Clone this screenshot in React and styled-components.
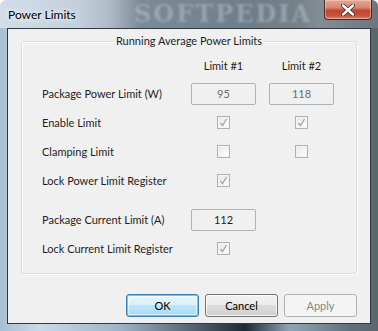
import React from 'react';
import styled, { createGlobalStyle } from 'styled-components';

const GlobalStyle = createGlobalStyle`
  html, body {
    margin: 0;
    padding: 0;
    width: 378px;
    height: 331px;
    overflow: hidden;
    background: #ffffff;
  }
  body {
    font-family: Lato, "Liberation Sans", sans-serif;
    font-size: 11px;
    color: #1e1e1e;
  }
`;

const Window = styled.div`
  width: 378px;
  height: 331px;
  display: flex;
  flex-direction: column;
  box-sizing: border-box;
  border-radius: 6px 6px 0 0;
  overflow: hidden;
`;

const TitleBar = styled.div`
  position: relative;
  height: 28px;
  flex: none;
  display: flex;
  align-items: flex-start;
  justify-content: space-between;
  background: linear-gradient(90deg, #d2dde8 0, #c3d0dc 80px, #aebbc7 110px, #7d8b96 140px, #6f7d88 250px, #76828a 300px, #838d93 320px, #6c767c 100%);
  overflow: hidden;
`;

const Title = styled.span`
  position: relative;
  z-index: 1;
  margin: 7px 0 0 8px;
  font-size: 12px;
  color: #000000;
  text-shadow: 0 0 8px rgba(255, 255, 255, 0.9), 0 0 4px rgba(255, 255, 255, 0.9);
`;

const Watermark = styled.span`
  position: absolute;
  left: 134px;
  top: 0;
  line-height: 28px;
  font-family: "DejaVu Serif", "Liberation Serif", serif;
  font-weight: bold;
  font-size: 24px;
  letter-spacing: 2px;
  color: rgba(190, 204, 216, 0.45);
  filter: blur(1.2px);
  pointer-events: none;
`;

const CloseButton = styled.div`
  position: relative;
  z-index: 1;
  width: 46px;
  height: 19px;
  margin-right: 6px;
  display: flex;
  align-items: center;
  justify-content: center;
  border: 1px solid #4a2a26;
  border-top: none;
  border-radius: 0 0 4px 4px;
  background: linear-gradient(180deg, #e7a895 0, #d68672 40%, #c4472e 55%, #c2513a 80%, #d8826a 100%);
  box-shadow: inset 0 0 0 1px rgba(255, 220, 210, 0.45);
`;

const FrameBody = styled.div`
  flex: 1;
  display: flex;
  padding: 0 7px 7px;
  background: linear-gradient(90deg, #a9bfd3 0, #c9daea 40px, #9db4c8 120px, #1f2a32 245px, #8fa6b8 290px, #60707a 350px, #5b666d 100%);
`;

const Client = styled.div`
  flex: 1;
  display: flex;
  flex-direction: column;
  padding: 12px 13px 6px;
  border: 1px solid #2c3943;
  background: #f0f0f0;
`;

const GroupBox = styled.div`
  position: relative;
  height: 233px;
  box-sizing: border-box;
  padding: 9px 0 0 20px;
  border: 1px solid #d5dfe5;
  border-radius: 3px;
  box-shadow: inset 1px 1px 0 #ffffff, 1px 1px 0 #ffffff;
`;

const Legend = styled.span`
  position: absolute;
  top: -9px;
  left: 50%;
  transform: translateX(-50%);
  padding: 0 2px;
  background: #f0f0f0;
  white-space: nowrap;
  line-height: 16px;
`;

const Row = styled.div`
  display: grid;
  grid-template-columns: 136px 65px 65px;
  column-gap: 13px;
  align-items: center;
  height: ${p => p.$h || 29}px;
  margin-top: ${p => p.$gap || 0}px;
`;

const Label = styled.span`
  white-space: nowrap;
`;

const ColHead = styled.span`
  text-align: center;
`;

const Cell = styled.div`
  display: flex;
  justify-content: center;
  align-items: center;
`;

const Field = styled.div`
  width: 65px;
  height: 22px;
  box-sizing: border-box;
  display: flex;
  align-items: center;
  justify-content: center;
  border: 1px solid #adb2b5;
  border-radius: 2px;
  background: #f0f0f0;
  color: ${p => (p.$enabled ? '#1e1e1e' : '#6d6d6d')};
`;

const Box = styled.div`
  width: 13px;
  height: 13px;
  box-sizing: border-box;
  display: flex;
  align-items: center;
  justify-content: center;
  border: 1px solid #b1b1b1;
  background: linear-gradient(135deg, #e6e6e6 0, #f6f6f6 60%, #ffffff 100%);
  box-shadow: inset 0 0 0 1px #f4f4f4;
`;

const ButtonBar = styled.div`
  display: flex;
  justify-content: flex-end;
  gap: 6px;
  margin-top: 20px;
`;

const Button = styled.div`
  width: 73px;
  height: 23px;
  box-sizing: border-box;
  display: flex;
  align-items: center;
  justify-content: center;
  border-radius: 3px;
  border: 1px solid ${p => (p.$variant === 'default' ? '#3c7fb1' : p.$variant === 'disabled' ? '#adb2b5' : '#707070')};
  color: ${p => (p.$variant === 'disabled' ? '#838383' : '#000000')};
  background: ${p =>
    p.$variant === 'default'
      ? 'linear-gradient(180deg, #eaf6fd 0, #d9f0fc 50%, #bee6fd 50%, #a7d9f5 100%)'
      : p.$variant === 'disabled'
      ? '#f4f4f4'
      : 'linear-gradient(180deg, #f2f2f2 0, #ebebeb 50%, #dddddd 50%, #cfcfcf 100%)'};
  box-shadow: ${p =>
    p.$variant === 'default'
      ? 'inset 0 0 0 1px #48d6fb, inset 0 0 0 2px rgba(255,255,255,0.5)'
      : p.$variant === 'disabled'
      ? 'none'
      : 'inset 0 0 0 1px rgba(255,255,255,0.8)'};
`;

const Check = ({ on }) => (
  <Box>
    {on && (
      <svg width="9" height="9" viewBox="0 0 9 9">
        <path d="M1.5 5 L3.5 7.5 L7.5 1" fill="none" stroke="#a8a8a8" strokeWidth="1.4" />
      </svg>
    )}
  </Box>
);

const CloseIcon = () => (
  <svg width="14" height="12" viewBox="0 0 14 12">
    <path d="M2 1.5 L12 10.5 M12 1.5 L2 10.5" stroke="#3a2a2a" strokeWidth="4" strokeLinecap="round" />
    <path d="M2 1.5 L12 10.5 M12 1.5 L2 10.5" stroke="#ffffff" strokeWidth="2.4" strokeLinecap="round" />
  </svg>
);

const rows = [
  { label: 'Enable Limit', c1: true, c2: true },
  { label: 'Clamping Limit', c1: false, c2: false },
  { label: 'Lock Power Limit Register', c1: true },
];

export default function App() {
  return (
    <>
      <GlobalStyle />
      <Window>
        <TitleBar>
          <Watermark>SOFTPEDIA</Watermark>
          <Title>Power Limits</Title>
          <CloseButton>
            <CloseIcon />
          </CloseButton>
        </TitleBar>
        <FrameBody>
          <Client>
            <GroupBox>
              <Legend>Running Average Power Limits</Legend>
              <Row $h={28}>
                <span />
                <ColHead>Limit #1</ColHead>
                <ColHead>Limit #2</ColHead>
              </Row>
              <Row>
                <Label>Package Power Limit (W)</Label>
                <Cell><Field>95</Field></Cell>
                <Cell><Field>118</Field></Cell>
              </Row>
              {rows.map(r => (
                <Row key={r.label}>
                  <Label>{r.label}</Label>
                  <Cell><Check on={r.c1} /></Cell>
                  <Cell>{r.c2 !== undefined && <Check on={r.c2} />}</Cell>
                </Row>
              ))}
              <Row $gap={10}>
                <Label>Package Current Limit (A)</Label>
                <Cell><Field $enabled>112</Field></Cell>
                <span />
              </Row>
              <Row>
                <Label>Lock Current Limit Register</Label>
                <Cell><Check on /></Cell>
                <span />
              </Row>
            </GroupBox>
            <ButtonBar>
              <Button $variant="default">OK</Button>
              <Button>Cancel</Button>
              <Button $variant="disabled">Apply</Button>
            </ButtonBar>
          </Client>
        </FrameBody>
      </Window>
    </>
  );
}
